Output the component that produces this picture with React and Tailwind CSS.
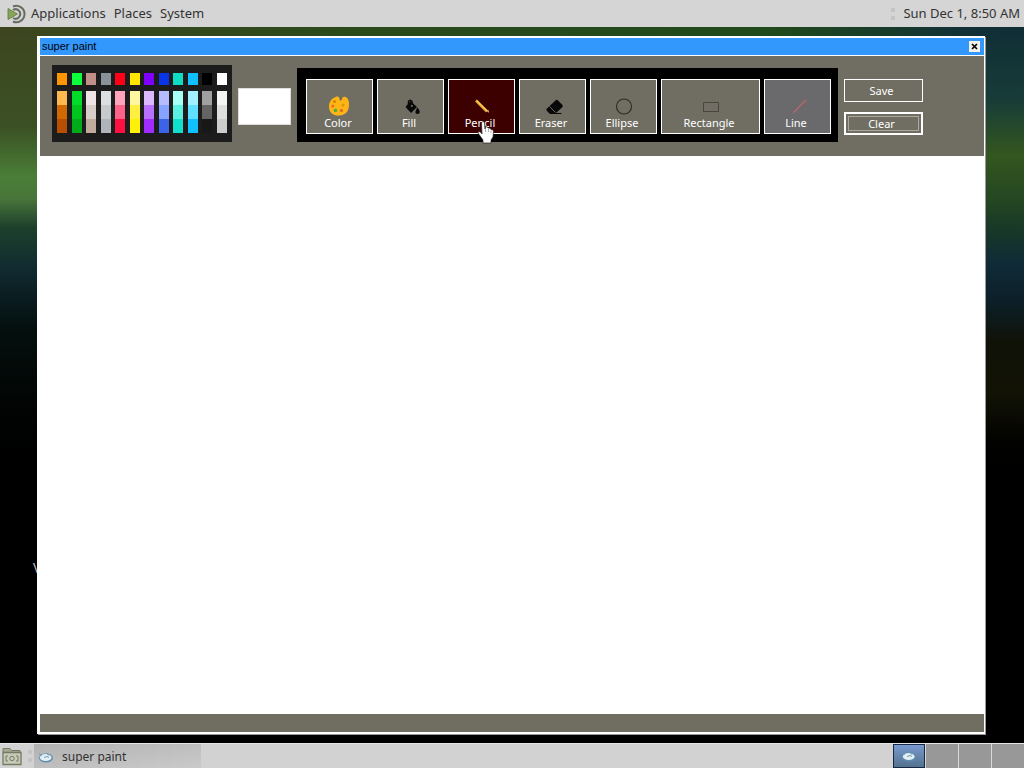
import React, { useState } from 'react';

const SWATCHES = [
  { name: 'orange', base: '#ff9500', shades: ['#ffb84d', '#d06a00', '#b84f00'] },
  { name: 'green', base: '#0cff3a', shades: ['#00dc28', '#00c41e', '#00aa18'] },
  { name: 'rose', base: '#c09088', shades: ['#eee4e6', '#d8ccc8', '#c0ab9c'] },
  { name: 'slate', base: '#8a9199', shades: ['#dcdfe2', '#c6cacc', '#aeb4ba'] },
  { name: 'red', base: '#ff0018', shades: ['#ffa4bc', '#ff6288', '#ff0f42'] },
  { name: 'yellow', base: '#ffe600', shades: ['#fff7a0', '#fff040', '#fff00c'] },
  { name: 'violet', base: '#8000ff', shades: ['#dcb8ff', '#b870ff', '#a02cff'] },
  { name: 'blue', base: '#0a34e6', shades: ['#b4bcff', '#86a4ff', '#3c64e8'] },
  { name: 'teal', base: '#10dcc4', shades: ['#a8fff4', '#5cf0e0', '#10e0cc'] },
  { name: 'sky', base: '#10c0ff', shades: ['#a0f0ff', '#60e0ff', '#10c0ff'] },
  { name: 'black', base: '#000000', shades: ['#a0a0a0', '#646464', '#181818'] },
  { name: 'white', base: '#ffffff', shades: ['#f4f4f4', '#dedede', '#cccccc'] },
];

const PaletteIcon = () => (
  <svg className="mr-0.5 h-5 w-5" viewBox="0 0 20 20">
    <path d="M6.500 1C9-.2 10.500 1 10.500 3C10.500 5 12.500 5 13 3C13.500 .5 16.500 0 18.500 2.500C20.500 5 20.500 12 18.500 15C16 19 12 20 8 19.500C3 19 0 15.500 0 10.500C0 6 2.500 2.500 6.500 1Z" fill="#fdb515" />
    <circle cx="5.500" cy="5.500" r="1.500" fill="#d98200" />
    <circle cx="3.800" cy="10" r="1.500" fill="#ec6d2d" />
    <circle cx="6.500" cy="14.500" r="1.800" fill="#4cae35" />
    <circle cx="12.500" cy="14.500" r="1.600" fill="#df6128" />
    <circle cx="14" cy="9" r="1.500" fill="#e29208" />
  </svg>
);

const FillIcon = () => (
  <svg className="ml-1 h-5 w-5" viewBox="0 0 20 20">
    <path d="M2.500 11L7.500 5L14 11L8 17Z" fill="#080808" />
    <path d="M5.500 9V5.500Q7 3 9 5.500V10" fill="none" stroke="#080808" strokeWidth="1.500" />
    <circle cx="8.800" cy="10" r="1.100" fill="#706e63" />
    <path d="M14.500 11.500Q17.500 15 16.500 17Q14.500 19 12.500 17Q12 15 14.500 11.500Z" fill="#080808" />
  </svg>
);

const PencilIcon = () => (
  <svg className="h-5 w-5" viewBox="0 0 20 20">
    <path d="M4 4.500L15 15.500" stroke="#f0a92c" strokeWidth="2.600" />
    <path d="M4.500 4.300L15.500 15" stroke="#ffe06a" strokeWidth="1" />
    <path d="M14.500 14.500L17 17L16.500 14Z" fill="#e8c4a0" />
  </svg>
);

const EraserIcon = () => (
  <svg className="ml-1 h-5 w-5" viewBox="0 0 20 20">
    <path d="M1.500 13L11 4Q12 3.500 13 4.500L17.500 9Q18 10 17.500 11L11 17H16.500V18H5L2 15Q1 14 1.500 13Z" fill="#080808" />
    <path d="M4.500 10.500L10.500 16.500" stroke="#706e63" strokeWidth=".9" />
  </svg>
);

const EllipseIcon = () => (
  <svg className="h-5 w-5" viewBox="0 0 20 20" fill="none">
    <circle cx="10" cy="10.500" r="7.500" stroke="#302c28" strokeWidth="1.200" />
  </svg>
);

const RectangleIcon = () => (
  <svg className="h-5 w-5" viewBox="0 0 20 20" fill="none">
    <path d="M2.500 6.500H17.500V15.500H2.500Z" stroke="#4a443e" />
  </svg>
);

const LineIcon = () => (
  <svg className="ml-1 h-5 w-5" viewBox="0 0 20 20" fill="none">
    <path d="M3.500 17L16 4" stroke="#966068" strokeWidth="2.200" />
    <path d="M3.500 16.500L15.500 4" stroke="#b47880" strokeWidth=".8" />
  </svg>
);

const TOOLS = [
  { name: 'Color', icon: <PaletteIcon /> },
  { name: 'Fill', icon: <FillIcon /> },
  { name: 'Pencil', icon: <PencilIcon /> },
  { name: 'Eraser', icon: <EraserIcon /> },
  { name: 'Ellipse', icon: <EllipseIcon /> },
  { name: 'Rectangle', icon: <RectangleIcon />, wide: true },
  { name: 'Line', icon: <LineIcon /> },
];

function Grip() {
  return (
    <span className="flex flex-col gap-1" aria-hidden="true">
      <i className="h-1 w-1 bg-[#c4c4c4]" />
      <i className="h-1 w-1 bg-[#c4c4c4]" />
    </span>
  );
}

function FishIcon() {
  return (
    <svg className="h-4 w-4 shrink-0" viewBox="0 0 16 16">
      <ellipse cx="8" cy="9" rx="7" ry="4.500" fill="#5f8dae" />
      <ellipse cx="7.700" cy="8.500" rx="5.800" ry="3.600" fill="#e2eff4" />
      <path d="M1 4.500L4 6.500M9 4L10 6L13 5.500" stroke="#6d98b2" fill="none" />
      <path d="M6 8.500L9 7.500L11 8.500" stroke="#739aae" fill="none" />
    </svg>
  );
}

function TopPanel() {
  return (
    <header className="flex h-[27px] shrink-0 items-center justify-between bg-[#d5d5d5] text-[13px] text-[#333]">
      <nav className="flex items-center gap-2 pl-[7px]">
        <a href="#applications" className="flex items-center gap-1">
          <svg className="h-5 w-5" viewBox="0 0 20 20" fill="none">
            <path d="M6 2.500A8.200 8.200 0 1 1 6 17.500" stroke="#686c60" strokeWidth="2" />
            <path d="M6 6A4.700 4.700 0 1 1 6 14" stroke="#686c60" strokeWidth="2" />
            <path d="M1 4.500L10.500 10L1 15.500Z" fill="#87a556" stroke="#61793f" strokeWidth=".8" />
          </svg>
          Applications
        </a>
        <a href="#places">Places</a>
        <a href="#system">System</a>
      </nav>
      <div className="flex items-center gap-2 pr-1">
        <Grip />
        <time>Sun Dec 1, 8:50 AM</time>
      </div>
    </header>
  );
}

function Palette({ onPick }) {
  return (
    <div className="flex h-[77px] w-[180px] justify-between bg-[#1c1c1c] px-[5px] pt-2">
      {SWATCHES.map((swatch) => (
        <div key={swatch.name} className="flex w-2.5 flex-col">
          <button
            aria-label={swatch.name}
            className="mb-1.5 h-3 w-full"
            style={{ backgroundColor: swatch.base }}
            onClick={() => onPick(swatch.base)}
          />
          {swatch.shades.map((shade, i) => (
            <button
              key={shade}
              aria-label={`${swatch.name} shade ${i + 1}`}
              className="h-3.5 w-full"
              style={{ backgroundColor: shade }}
              onClick={() => onPick(shade)}
            />
          ))}
        </div>
      ))}
    </div>
  );
}

function ToolButton({ tool, active, onSelect }) {
  const width = tool.wide ? 'w-[99px]' : 'w-[67px]';
  const background = active ? 'bg-[#3c0000]' : tool.name === 'Line' ? 'bg-[#6a6a6c]' : 'bg-[#706e63]';

  return (
    <button
      aria-pressed={active}
      onClick={onSelect}
      className={`relative flex h-[55px] flex-col items-center justify-end border border-white pb-[3px] ${width} ${background}`}
    >
      <span className="flex h-5 items-center justify-center">{tool.icon}</span>
      <span className="pr-[3px] leading-[14px]">{tool.name}</span>
      {/* Hand pointer resting on the selected tool */}
      {active && (
        <svg className="absolute top-10 left-7 z-10 h-6 w-[18px]" viewBox="0 0 18 24" aria-hidden="true">
          <path d="M4.500 2.500Q6 .5 7.500 2.500L8 9L8.500 7Q10.500 6 11 8L11.500 8Q13.500 7.500 14 9.500Q16.500 9 16.500 11.500L16 17L14 20V23H6V20L1 13Q1 10.500 3.500 12L5 14Z" fill="#fff" stroke="#282020" strokeWidth=".7" />
          <path d="M8.500 9V12M11.500 9V12M14 10.500V13" stroke="#777" strokeWidth=".6" />
        </svg>
      )}
    </button>
  );
}

function PaintWindow() {
  const [color, setColor] = useState('#ffffff');
  const [tool, setTool] = useState('Pencil');

  return (
    <section className="relative z-10 flex flex-1 flex-col border-2 border-r-1 border-b-1 border-l-3 border-white bg-white text-[11px] shadow-[1px_1px_0_#999]">
      <div className="flex h-[18px] shrink-0 items-center justify-between border-b border-white bg-[#3398fd] pr-1 pl-0.5 text-black">
        <h1 className="font-['Liberation_Sans',sans-serif]">super paint</h1>
        <button aria-label="Close" className="flex h-[11px] w-[11px] items-center justify-center bg-[#f4f1e8]">
          <svg className="h-[7px] w-[7px]" viewBox="0 0 7 7">
            <path d="M1 1L6 6M6 1L1 6" stroke="#000" strokeWidth="1.700" />
          </svg>
        </button>
      </div>

      <div className="flex h-[100px] shrink-0 items-start gap-1.5 bg-[#706e62] pt-[9px] pl-3 text-white">
        <Palette onPick={setColor} />
        <output
          aria-label="Current color"
          className="mt-[23px] h-[37px] w-[53px] border border-[#ddd]"
          style={{ backgroundColor: color }}
        />
        <div className="mt-[3px] flex h-[74px] gap-1 bg-black pt-[11px] pr-[7px] pl-[9px]">
          {TOOLS.map((item) => (
            <ToolButton key={item.name} tool={item} active={item.name === tool} onSelect={() => setTool(item.name)} />
          ))}
        </div>
        <div className="mt-3.5 flex w-[79px] flex-col gap-2.5">
          <button className="h-[23px] border border-white pt-px pr-1">Save</button>
          <button className="flex h-[23px] border-2 border-white p-0.5">
            <span className="flex flex-1 items-center justify-center border border-[#aaa99f] pt-px pr-1">Clear</span>
          </button>
        </div>
      </div>

      <canvas className="min-h-0 w-full flex-1 bg-white" />
      <footer className="mb-px h-[18px] shrink-0 bg-[#706e60]" />
    </section>
  );
}

function BottomPanel() {
  return (
    <footer className="flex h-[25px] shrink-0 items-stretch justify-between border-t border-[#e4e4e4] bg-[#d2d2d2] text-xs text-[#333]">
      <div className="flex items-center">
        <button aria-label="Show desktop" className="mr-1.5 ml-0.5">
          <svg className="h-5 w-5" viewBox="0 0 20 20" fill="none" stroke="#747c60">
            <path d="M1 6V2.500H8L9.500 4.500H18V7" fill="#a4a994" />
            <path d="M1 6.500H19V18.500H1Z" fill="#c6cab8" strokeWidth="1.300" />
            <path d="M6 10H4V15H6M14 10H16V15H14" />
            <circle cx="10" cy="12.500" r="2.200" />
          </svg>
        </button>
        <Grip />
        <button className="ml-0.5 flex h-6 w-[167px] items-center gap-2 bg-linear-to-br from-[#b2b2b2] to-[#cacaca] pt-0.5 pl-1">
          <FishIcon />
          super paint
        </button>
      </div>
      <div className="flex gap-px bg-[#d8d8d8]">
        <button aria-label="Workspace 1" className="flex w-8 items-center justify-center border border-[#182844] bg-linear-to-b from-[#7899d0] to-[#53728e]">
          <FishIcon />
        </button>
        <button aria-label="Workspace 2" className="w-8 bg-[#989898]" />
        <button aria-label="Workspace 3" className="w-8 bg-[#989898]" />
        <button aria-label="Workspace 4" className="w-8 bg-[#989898]" />
      </div>
    </footer>
  );
}

export default function App() {
  return (
    <div className="flex min-h-screen flex-col bg-black font-['Noto_Sans',sans-serif]">
      <TopPanel />
      <main className="relative flex flex-1 flex-col bg-[linear-gradient(90deg,#3d451f,#2c4a1c_30%,#1f4a1a_75%,#123038_95%,#102e36),linear-gradient(#3d451f,#3b5124_14%,#4a7e37_21%,#48753a_24%,#1d402c_28%,#102a30_34%,#0a1c20_38%,#04100e_42%,#020504_52%,#000_60%),linear-gradient(#102e36,#173c38_10%,#34561f_18%,#254722_24%,#163629_29%,#102b38_33%,#0c2029_38%,#101208_44%,#121305_51%,#020200_58%,#000_62%)] bg-[size:100%_9px,50%_100%,50%_100%] bg-[position:top,left,right] bg-no-repeat pt-[9px] pr-[39px] pb-[9px] pl-[37px]">
        {/* Desktop icon label mostly hidden behind the window */}
        <span className="absolute top-[531px] left-[33px] text-sm leading-5 text-[#bbb]">V</span>
        <PaintWindow />
      </main>
      <BottomPanel />
    </div>
  );
}
